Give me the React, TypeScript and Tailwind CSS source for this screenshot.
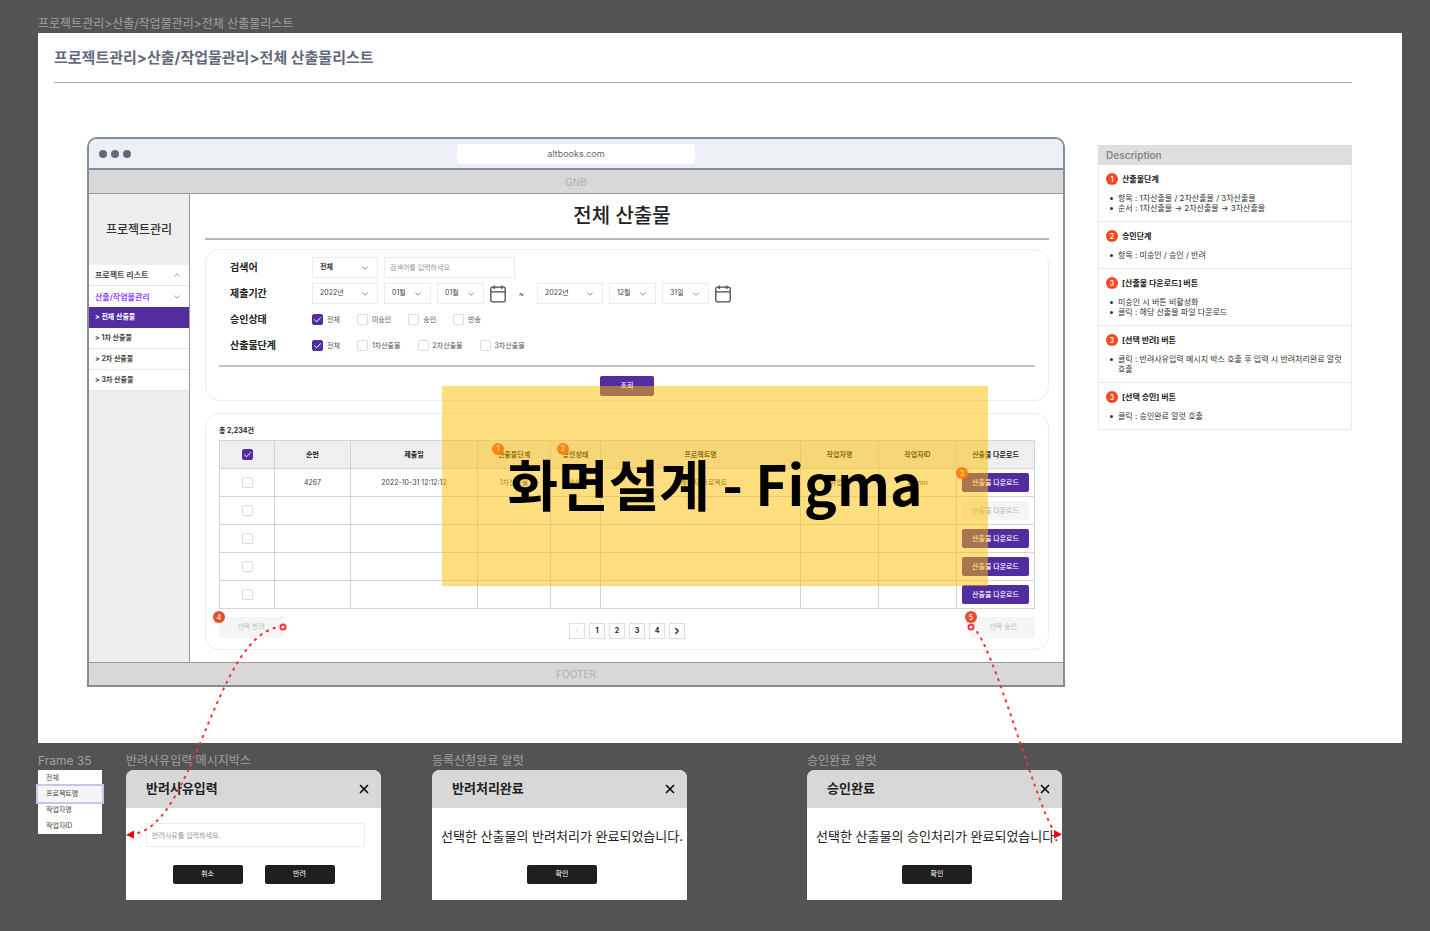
import { useState } from "react";
import type { ReactNode } from "react";
import { ChevronDown, ChevronLeft, ChevronRight, ChevronUp, X } from "lucide-react";

const SUB_MENU = ["전체 산출물", "1차 산출물", "2차 산출물", "3차 산출물"];
const STATUS = ["전체", "미승인", "승인", "반송"];
const STEPS = ["전체", "1차산출물", "2차산출물", "3차산출물"];
const FRAME_ITEMS = ["전체", "프로젝트명", "작업자명", "작업자ID"];

const COLUMNS = [
  { label: "순번" },
  { label: "제출일" },
  { label: "산출물단계", badge: 1 },
  { label: "승인상태", badge: 2 },
  { label: "프로젝트명" },
  { label: "작업자명" },
  { label: "작업자ID" },
  { label: "산출물 다운로드" },
];

const EMPTY = ["", "", "", "", "", "", ""];
const ROWS = [
  { cells: ["4267", "2022-10-31 12:12:12", "1차산출물", "승인", "홈페이지 프로젝트", "작업자", "admin"], enabled: true },
  { cells: EMPTY, enabled: false },
  { cells: EMPTY, enabled: true },
  { cells: EMPTY, enabled: true },
  { cells: EMPTY, enabled: true },
];

const NOTES = [
  { no: 1, title: "산출물단계", items: ["항목 : 1차산출물 / 2차산출물 / 3차산출물", "순서 : 1차산출물 → 2차산출물 → 3차산출물"] },
  { no: 2, title: "승인단계", items: ["항목 : 미승인 / 승인 / 반려"] },
  { no: 3, title: "[산출물 다운로드] 버튼", items: ["미승인 시 버튼 비활성화", "클릭 : 해당 산출물 파일 다운로드"] },
  { no: 3, title: "[선택 반려] 버튼", items: ["클릭 : 반려사유입력 메시지 박스 호출 후 입력 시 반려처리완료 알럿 호출"] },
  { no: 3, title: "[선택 승인] 버튼", items: ["클릭 : 승인완료 알럿 호출"] },
];

function Badge({ children, className = "" }: { children: ReactNode; className?: string }) {
  return (
    <span
      className={`flex size-3 shrink-0 items-center justify-center rounded-full bg-[#f04a23] text-[7px] leading-none font-medium text-white ${className}`}
    >
      {children}
    </span>
  );
}

function Check({ label, hideLabel, checked = false }: { label: string; hideLabel?: boolean; checked?: boolean }) {
  const [on, setOn] = useState(checked);
  return (
    <label className="flex items-center gap-1 text-[7px] leading-3 text-[#555]">
      <span className="relative block size-[11px]">
        <input
          type="checkbox"
          checked={on}
          onChange={() => setOn(!on)}
          aria-label={label}
          className="block size-[11px] appearance-none rounded-[2px] border border-[#dcdcdc] bg-white checked:border-[#512da0] checked:bg-[#512da0]"
        />
        {on && (
          <svg viewBox="0 0 11 11" className="pointer-events-none absolute inset-0 size-[11px]" fill="none" stroke="#fff">
            <path d="M2.3 5.6 4.6 7.8 8.8 3.4" />
          </svg>
        )}
      </span>
      {!hideLabel && label}
    </label>
  );
}

function Select({ label, value, wide, bold }: { label: string; value: string; wide?: boolean; bold?: boolean }) {
  return (
    <span className={`relative block h-[21px] ${wide ? "w-[66px]" : "w-[47px]"}`}>
      <select
        aria-label={label}
        className={`block h-full w-full appearance-none border border-[#ececec] bg-white pl-[7px] text-[7px] ${bold ? "font-bold text-[#333]" : "text-[#444]"}`}
      >
        <option>{value}</option>
      </select>
      <ChevronDown className="pointer-events-none absolute top-1.5 right-2 size-2.5 text-[#777]" strokeWidth={2} />
    </span>
  );
}

function CalendarIcon() {
  return (
    <svg viewBox="0 0 16 18" className="h-[18px] w-4" fill="none" stroke="#4a4a4a" strokeWidth="1.3">
      <rect x="0.8" y="2.2" width="14.4" height="14.6" rx="1.6" />
      <path d="M0.8 6.8h14.4M4.2 0.4v3.6M11.8 0.4v3.6" />
    </svg>
  );
}

function FilterRow({ label, children }: { label: string; children: ReactNode }) {
  return (
    <div className="flex h-[21px] items-center">
      <span className="w-[82px] shrink-0 text-[10px] font-bold text-[#222]">{label}</span>
      {children}
    </div>
  );
}

function Sidebar() {
  return (
    <aside className="w-[101px] shrink-0 border-r border-[#999] bg-[#eee]">
      <h2 className="flex h-[71px] items-center justify-center text-xs font-medium text-[#333]">프로젝트관리</h2>
      <nav className="text-[7px] font-bold text-[#444]">
        <a href="#list" className="flex h-[21px] items-center justify-between border-b border-[#e6e6e6] bg-white pr-[7px] pl-1.5 text-[8px]">
          프로젝트 리스트
          <ChevronUp className="size-2.5 text-[#888]" />
        </a>
        <a href="#works" className="flex h-[21px] items-center justify-between bg-white pr-[7px] pl-1.5 text-[8px] text-[#9747ff]">
          산출/작업물관리
          <ChevronDown className="size-2.5 text-[#888]" />
        </a>
        {SUB_MENU.map((name, i) => (
          <a
            key={name}
            href={`#sub-${i}`}
            className={`flex h-[21px] items-center pl-1.5 ${i === 0 ? "bg-[#512da0] text-white" : "border-b border-[#e6e6e6] bg-white"}`}
          >
            &gt; {name}
          </a>
        ))}
      </nav>
    </aside>
  );
}

function SearchCard() {
  return (
    <section className="mt-[9px] rounded-[14px] border border-[#ededed] px-[13px] pt-[7px] pb-1">
      <div className="flex flex-col gap-[5px] pl-[11px]">
        <FilterRow label="검색어">
          <div className="flex gap-1.5">
            <Select label="검색 구분" value="전체" wide bold />
            <input
              aria-label="검색어"
              placeholder="검색어를 입력하세요"
              className="h-[21px] w-[131px] border border-[#ececec] px-[5px] text-[7px] placeholder:text-[#999]"
            />
          </div>
        </FilterRow>
        <FilterRow label="제출기간">
          <div className="flex items-center gap-1.5">
            <Select label="시작 연도" value="2022년" wide />
            <Select label="시작 월" value="01월" />
            <Select label="시작 일" value="01월" />
            <CalendarIcon />
            <span className="w-[19px] text-center text-[8px] text-[#444]">~</span>
            <Select label="종료 연도" value="2022년" wide />
            <Select label="종료 월" value="12월" />
            <Select label="종료 일" value="31일" />
            <CalendarIcon />
          </div>
        </FilterRow>
        <FilterRow label="승인상태">
          <div className="flex gap-[17px]">
            {STATUS.map((name, i) => (
              <Check key={name} label={name} checked={i === 0} />
            ))}
          </div>
        </FilterRow>
        <FilterRow label="산출물단계">
          <div className="flex gap-[17px]">
            {STEPS.map((name, i) => (
              <Check key={name} label={name} checked={i === 0} />
            ))}
          </div>
        </FilterRow>
      </div>
      <hr className="mt-[9px] border-t-2 border-[#c4c4c4]" />
      <button className="mx-auto mt-[9px] block h-5 w-[54px] rounded-[2px] bg-[#512da0] text-[7px] font-medium text-white">
        조회
      </button>
    </section>
  );
}

function ResultCard() {
  return (
    <section className="mt-3 rounded-[14px] border border-[#ededed] px-[13px] pt-[11px] pb-2.5">
      <p className="text-[7px] leading-3 font-bold text-[#222]">총 2,234건</p>
      <table className="mt-[3px] w-full table-fixed border-collapse text-center text-[7px] leading-3 text-[#444]">
        <colgroup>
          <col className="w-[55px]" />
          <col className="w-[76px]" />
          <col className="w-[127px]" />
          <col className="w-[73px]" />
          <col className="w-[50px]" />
          <col />
          <col className="w-[78px]" />
          <col className="w-[78px]" />
          <col className="w-[78px]" />
        </colgroup>
        <thead>
          <tr className="h-7 bg-[#efefef]">
            <th className="border border-[#d4d4d4] p-0">
              <div className="flex justify-center">
                <Check label="전체 선택" hideLabel checked />
              </div>
            </th>
            {COLUMNS.map((col) => (
              <th key={col.label} className="border border-[#d4d4d4] p-0 font-bold text-[#222]">
                <span className="relative inline-block">
                  {col.label}
                  {col.badge && <Badge className="absolute -top-1.5 -left-1.5">{col.badge}</Badge>}
                </span>
              </th>
            ))}
          </tr>
        </thead>
        <tbody>
          {ROWS.map((row, i) => (
            <tr key={i} className="h-7">
              <td className="border border-[#d4d4d4] p-0">
                <div className="flex justify-center">
                  <Check label={`${i + 1}행 선택`} hideLabel />
                </div>
              </td>
              {row.cells.map((cell, j) => (
                <td key={j} className="border border-[#d4d4d4] p-0">
                  {cell}
                </td>
              ))}
              <td className="border border-[#d4d4d4] p-0">
                <button
                  disabled={!row.enabled}
                  className="relative mx-auto block h-[19px] w-[67px] rounded-[2px] bg-[#512da0] text-[7px] font-medium text-white disabled:bg-[#f5f5f5] disabled:text-[#bbb]"
                >
                  산출물 다운로드
                  {i === 0 && <Badge className="absolute -top-1.5 -left-1.5">3</Badge>}
                </button>
              </td>
            </tr>
          ))}
        </tbody>
      </table>

      <div className="mt-2 flex h-[22px] items-start justify-between">
        <button disabled className="relative h-[21px] w-16 bg-[#f5f5f5] text-[7px] text-[#bbb]">
          선택 반려
          <Badge className="absolute -top-1.5 -left-1.5">4</Badge>
        </button>
        <div className="flex gap-1 self-end text-[7px] font-bold text-[#222]">
          <button disabled aria-label="이전" className="flex size-4 items-center justify-center border border-[#ddd] text-[#ccc]">
            <ChevronLeft className="size-2" />
          </button>
          {[1, 2, 3, 4].map((n) => (
            <button key={n} className="flex size-4 items-center justify-center border border-[#ddd]">
              {n}
            </button>
          ))}
          <button aria-label="다음" className="flex size-4 items-center justify-center border border-[#ddd]">
            <ChevronRight className="size-2.5" strokeWidth={3} />
          </button>
        </div>
        <button disabled className="relative h-[21px] w-16 bg-[#f5f5f5] text-[7px] text-[#bbb]">
          선택 승인
          <Badge className="absolute -top-1.5 -left-1.5">5</Badge>
        </button>
      </div>
    </section>
  );
}

function BrowserMockup() {
  return (
    <div className="min-w-0 flex-1 overflow-hidden rounded-t-[10px] border-2 border-[#858d9a] bg-white">
      <div className="grid h-[31px] grid-cols-[1fr_238px_1fr] items-center border-b-2 border-[#858d9a] bg-[#ecf0f4]">
        <div className="flex gap-1 pl-2.5">
          <span className="size-2 rounded-full bg-[#64687c]" />
          <span className="size-2 rounded-full bg-[#64687c]" />
          <span className="size-2 rounded-full bg-[#64687c]" />
        </div>
        <div className="h-5 rounded bg-white text-center text-[9px] leading-5 text-[#64687c]">altbooks.com</div>
      </div>
      <div className="h-6 border-b border-[#999] bg-[#d8d8d8] text-center text-[10px] leading-6 text-[#b0b0b0]">GNB</div>
      <div className="flex">
        <Sidebar />
        <main className="min-w-0 flex-1 pr-3.5 pb-3 pl-[15px]">
          <h1 className="border-b-2 border-[#b8b8b8] pt-2 pr-2.5 pb-2 text-center text-xl leading-7 font-medium text-[#222]">
            전체 산출물
          </h1>
          <SearchCard />
          <ResultCard />
        </main>
      </div>
      <div className="h-[23px] border-t border-[#999] bg-[#d8d8d8] text-center text-[10px] leading-[23px] text-[#b0b0b0]">
        FOOTER
      </div>
    </div>
  );
}

function Description() {
  return (
    <aside className="mt-2 w-[254px] shrink-0 self-start text-[8px] leading-[10px] text-[#333]">
      <h2 className="bg-[#dedede] pl-2 text-[10px] leading-5 font-semibold text-[#888]">Description</h2>
      {NOTES.map((note) => (
        <section key={note.title} className="border-x border-b border-[#ebebeb] pt-2 pr-1 pb-2 pl-[7px]">
          <h3 className="flex items-center gap-1 text-[8px] leading-3 font-bold text-[#222]">
            <Badge>{note.no}</Badge>
            {note.title}
          </h3>
          <ul className="mt-2 pl-1 break-keep">
            {note.items.map((item) => (
              <li key={item} className="flex gap-[5px] before:mt-1 before:size-[3px] before:shrink-0 before:rounded-full before:bg-[#333]">
                {item}
              </li>
            ))}
          </ul>
        </section>
      ))}
    </aside>
  );
}

function DialogButton({ children }: { children: ReactNode }) {
  return <button className="h-[19px] w-[70px] rounded-[2px] bg-[#1f1f1f] text-[7px] text-white">{children}</button>;
}

function Dialog({ name, title, className = "", children }: { name: string; title: string; className?: string; children: ReactNode }) {
  return (
    <div className={`w-[255px] ${className}`}>
      <p className="text-xs leading-4 whitespace-nowrap text-[#a0a0a0]">{name}</p>
      <div role="dialog" aria-label={title} className="mt-px overflow-hidden rounded-t-lg bg-white">
        <div className="flex h-[38px] items-center justify-between bg-[#d8d8d8] pr-2.5 pl-5">
          <h2 className="text-[13px] font-bold text-[#222]">{title}</h2>
          <button aria-label="닫기">
            <X className="size-3.5 text-[#111]" strokeWidth={3} />
          </button>
        </div>
        {children}
      </div>
    </div>
  );
}

function Alert({ message }: { message: string }) {
  return (
    <div className="flex h-[92px] flex-col items-center justify-between pt-[18px] pb-4 pl-[5px]">
      <p className="text-[13px] leading-5 whitespace-nowrap text-[#222]">{message}</p>
      <DialogButton>확인</DialogButton>
    </div>
  );
}

function Connectors() {
  return (
    <svg className="pointer-events-none absolute inset-0 h-full w-full" fill="none" stroke="#f5333f" strokeWidth="2">
      <path d="M283 627C215 627 195 834 130 834" strokeDasharray="3 4.4" />
      <path d="M971 627C990 627 1043 834 1058 834" strokeDasharray="3 4.4" />
      <circle cx="283" cy="627" r="2.5" fill="#fff" />
      <circle cx="971" cy="627" r="2.5" fill="#fff" />
      <path d="M126 835 134 830.5V838.5ZM1062 834.5 1054 830V838.5Z" fill="#f00" stroke="none" />
    </svg>
  );
}

export default function App() {
  return (
    <div className="relative min-h-screen bg-[#535353] pt-4 pr-7 pb-7 pl-[38px] font-['Inter','Noto_Sans_CJK_KR',sans-serif]">
      <p className="text-xs leading-4 text-[#a0a0a0]">프로젝트관리&gt;산출/작업물관리&gt;전체 산출물리스트</p>

      <div className="mt-px bg-white pt-[13px] pr-[50px] pb-14 pl-4">
        <header className="border-b border-[#aaa] pb-3 text-[15px] leading-6 font-bold text-[#64687c]">
          프로젝트관리&gt;산출/작업물관리&gt;전체 산출물리스트
        </header>
        <div className="mt-[54px] flex gap-[33px] pl-[33px]">
          <BrowserMockup />
          <Description />
        </div>
      </div>

      <div className="mt-2.5 flex items-start">
        <div className="w-16">
          <p className="text-xs leading-4 whitespace-nowrap text-[#a0a0a0]">Frame 35</p>
          <ul className="mt-px bg-white text-[7px] leading-4 text-[#444]">
            {FRAME_ITEMS.map((name, i) => (
              <li key={name} className={`pl-2 ${i === 1 ? "bg-[#f5f5f5] ring-2 ring-[#c9c3ee]" : ""}`}>
                {name}
              </li>
            ))}
          </ul>
        </div>
        <Dialog name="반려사유입력 메시지박스" title="반려사유입력" className="ml-6">
          <div className="flex h-[92px] flex-col justify-between pt-[15px] pr-4 pb-4 pl-5">
            <input
              aria-label="반려사유"
              placeholder="반려사유를 입력하세요."
              className="h-6 border border-[#ececec] px-[5px] text-[7px] placeholder:text-[#999]"
            />
            <div className="flex justify-center gap-[22px] pr-1">
              <DialogButton>취소</DialogButton>
              <DialogButton>반려</DialogButton>
            </div>
          </div>
        </Dialog>
        <Dialog name="등록신청완료 알럿" title="반려처리완료" className="ml-[51px]">
          <Alert message="선택한 산출물의 반려처리가 완료되었습니다." />
        </Dialog>
        <Dialog name="승인완료 알럿" title="승인완료" className="ml-[120px]">
          <Alert message="선택한 산출물의 승인처리가 완료되었습니다." />
        </Dialog>
      </div>

      <Connectors />

      {/* Caption band */}
      <div className="absolute top-[386px] left-1/2 flex h-[200px] w-[546px] -translate-x-1/2 items-center justify-center bg-[#ffbe00]/50 pb-2 font-['Noto_Sans_CJK_KR',sans-serif] text-[55px] font-bold text-black">
        화면설계 - Figma
      </div>
    </div>
  );
}
